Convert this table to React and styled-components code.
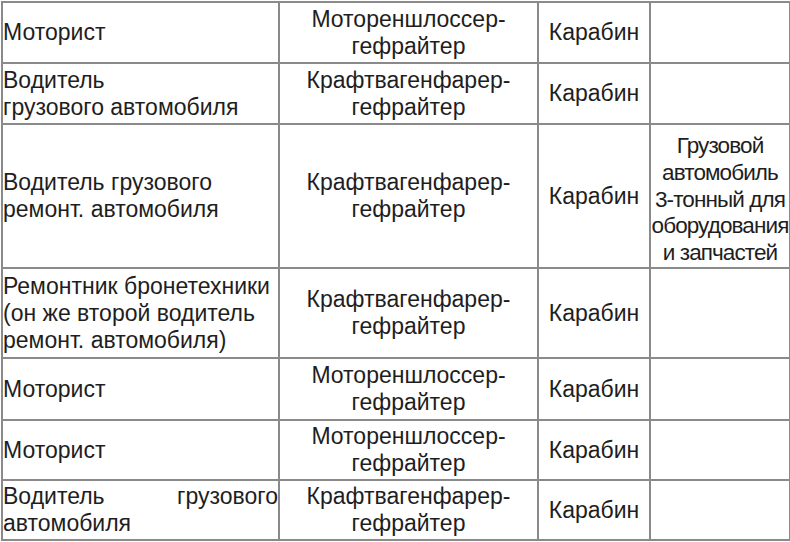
import React from 'react';
import styled, { createGlobalStyle } from 'styled-components';

const GlobalStyle = createGlobalStyle`
  html, body {
    margin: 0;
    padding: 0;
    background: #ffffff;
  }
  body {
    font-family: "Liberation Sans", Arial, sans-serif;
    color: #1e1e1e;
  }
`;

const Sheet = styled.div`
  width: 790px;
  height: 542px;
  overflow: hidden;
  padding: 1px 0 0 1px;
  box-sizing: border-box;
`;

const Table = styled.table`
  border-collapse: collapse;
  table-layout: fixed;
  width: 788px;
  font-size: 23px;
  line-height: 27px;
`;

const Col = styled.col`
  width: ${p => p.$w}px;
`;

const Row = styled.tr`
  height: ${p => p.$h}px;
`;

const Cell = styled.td`
  border: 2px solid #8a8a8a;
  padding: 0 ${p => (p.$align === 'left' ? '0' : '1px')};
  vertical-align: middle;
  text-align: ${p => (p.$justify ? 'justify' : p.$align || 'center')};
  text-align-last: ${p => (p.$justify ? 'left' : 'auto')};
  white-space: ${p => (p.$justify ? 'normal' : 'nowrap')};
`;

const NoteCell = styled(Cell)`
  padding: 8px 0 0;
  font-size: 22.5px;
  letter-spacing: -0.9px;
  line-height: 26.7px;
`;

const rows = [
  { h: 61, role: ['Моторист'], rank: ['Мотореншлоссер-', 'гефрайтер'] },
  { h: 61, role: ['Водитель', 'грузового автомобиля'], rank: ['Крафтвагенфарер-', 'гефрайтер'] },
  {
    h: 144,
    role: ['Водитель грузового', 'ремонт. автомобиля'],
    rank: ['Крафтвагенфарер-', 'гефрайтер'],
    note: ['Грузовой', 'автомобиль', '3-тонный для', 'оборудования', 'и запчастей'],
  },
  {
    h: 90,
    role: ['Ремонтник бронетехники', '(он же второй водитель', 'ремонт. автомобиля)'],
    rank: ['Крафтвагенфарер-', 'гефрайтер'],
  },
  { h: 62, role: ['Моторист'], rank: ['Мотореншлоссер-', 'гефрайтер'] },
  { h: 60, role: ['Моторист'], rank: ['Мотореншлоссер-', 'гефрайтер'] },
  { h: 60, role: 'Водитель грузового автомобиля', justify: true, rank: ['Крафтвагенфарер-', 'гефрайтер'] },
];

const Lines = ({ items }) =>
  items.map((t, i) => (
    <React.Fragment key={i}>
      {i > 0 && <br />}
      {t}
    </React.Fragment>
  ));

export default function App() {
  return (
    <>
      <GlobalStyle />
      <Sheet>
        <Table>
          <colgroup>
            <Col $w={277} />
            <Col $w={259} />
            <Col $w={112} />
            <Col $w={140} />
          </colgroup>
          <tbody>
            {rows.map((r, i) => (
              <Row key={i} $h={r.h}>
                <Cell $align="left" $justify={r.justify}>
                  {r.justify ? r.role : <Lines items={r.role} />}
                </Cell>
                <Cell>
                  <Lines items={r.rank} />
                </Cell>
                <Cell>Карабин</Cell>
                <NoteCell>{r.note && <Lines items={r.note} />}</NoteCell>
              </Row>
            ))}
          </tbody>
        </Table>
      </Sheet>
    </>
  );
}
